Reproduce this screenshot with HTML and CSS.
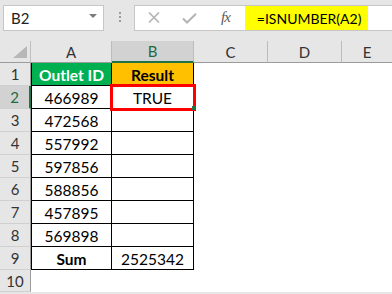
FILE: index.html
```html
<!DOCTYPE html>
<html lang="en">
<head>
    <meta charset="UTF-8">
    <meta name="viewport" content="width=device-width, initial-scale=1.0">
    <title>ISNUMBER</title>
    <link rel="stylesheet" href="styles.css">
</head>
<body>

    <div class="toolbar">
        <div class="namebox">
            <span>B2</span>
            <span class="caret"></span>
        </div>
        <div class="dots"><i></i><i></i><i></i></div>
        <div class="formula">
            <svg class="cancel" width="12" height="11" viewBox="0 0 12 11">
                <path d="M1 0.5 L11 10.5 M11 0.5 L1 10.5" stroke="#b3b3b3" stroke-width="1.6" fill="none"/>
            </svg>
            <svg class="enter" width="15" height="11" viewBox="0 0 15 11">
                <path d="M1 5.5 L5 9.5 L14 0.8" stroke="#b3b3b3" stroke-width="2" fill="none"/>
            </svg>
            <span class="fx">fx</span>
            <span class="formula-text">=ISNUMBER(A2)</span>
        </div>
    </div>

    <div class="sheet">
        <div class="corner"><span class="tri"></span></div>
        <div class="col-head">A</div>
        <div class="col-head active">B</div>
        <div class="col-head">C</div>
        <div class="col-head">D</div>
        <div class="col-head last">E</div>

        <div class="row-head">1</div>
        <div class="cell t first head-green">Outlet ID</div>
        <div class="cell t head-yellow">Result</div>
        <div class="blank"></div><div class="blank"></div><div class="blank"></div>

        <div class="row-head active">2</div>
        <div class="cell t first">466989</div>
        <div class="cell t selected">TRUE<span class="handle"></span></div>
        <div class="blank"></div><div class="blank"></div><div class="blank"></div>

        <div class="row-head">3</div>
        <div class="cell t first">472568</div>
        <div class="cell t"></div>
        <div class="blank"></div><div class="blank"></div><div class="blank"></div>

        <div class="row-head">4</div>
        <div class="cell t first">557992</div>
        <div class="cell t"></div>
        <div class="blank"></div><div class="blank"></div><div class="blank"></div>

        <div class="row-head">5</div>
        <div class="cell t first">597856</div>
        <div class="cell t"></div>
        <div class="blank"></div><div class="blank"></div><div class="blank"></div>

        <div class="row-head">6</div>
        <div class="cell t first">588856</div>
        <div class="cell t"></div>
        <div class="blank"></div><div class="blank"></div><div class="blank"></div>

        <div class="row-head">7</div>
        <div class="cell t first">457895</div>
        <div class="cell t"></div>
        <div class="blank"></div><div class="blank"></div><div class="blank"></div>

        <div class="row-head">8</div>
        <div class="cell t first">569898</div>
        <div class="cell t"></div>
        <div class="blank"></div><div class="blank"></div><div class="blank"></div>

        <div class="row-head">9</div>
        <div class="cell t first bold">Sum</div>
        <div class="cell t">2525342</div>
        <div class="blank"></div><div class="blank"></div><div class="blank"></div>

        <div class="row-head">10</div>
        <div class="blank"></div><div class="blank"></div><div class="blank"></div><div class="blank"></div><div class="blank"></div>
    </div>

</body>
</html>
```

FILE: styles.css
```css
* {
    box-sizing: border-box;
}
body {
    margin: 0;
    font-family: Lato, "Liberation Sans", sans-serif;
    background-color: #e6e6e6;
    color: #000;
    overflow: hidden;
}
.toolbar {
    height: 41px;
    display: flex;
    align-items: flex-start;
    padding-top: 5px;
    padding-left: 3px;
}
.namebox {
    width: 101px;
    height: 26px;
    background-color: #fff;
    border: 1px solid #c6c6c6;
    display: flex;
    align-items: center;
    justify-content: space-between;
    padding: 0 6px 0 7px;
    font-size: 15px;
    color: #222;
}
.caret {
    width: 0;
    height: 0;
    border-left: 4px solid transparent;
    border-right: 4px solid transparent;
    border-top: 4px solid #7a7a7a;
    margin-top: -4px;
}
.dots {
    width: 2px;
    margin: 7px 13px 0 15px;
    display: flex;
    flex-direction: column;
    gap: 2px;
}
.dots i {
    display: block;
    width: 2px;
    height: 2px;
    background-color: #9c9c9c;
}
.formula {
    flex: 1;
    height: 26px;
    margin-right: -1px;
    background-color: #fff;
    border: 1px solid #c6c6c6;
    display: flex;
    align-items: center;
    padding-left: 13px;
}
.cancel {
    margin-top: -1px;
}
.enter {
    margin-left: 22px;
    margin-top: 1px;
}
.fx {
    font-family: "Liberation Serif", serif;
    font-style: italic;
    font-size: 15px;
    color: #5a5a5a;
    margin-left: 24px;
    margin-top: -2px;
    letter-spacing: -1px;
}
.formula-text {
    align-self: stretch;
    margin-left: 15px;
    background-color: #ffff00;
    padding: 4px 7px 0 12px;
    font-size: 14px;
    color: #000;
}
.sheet {
    display: grid;
    grid-template-columns: 31px 81px 82px 74px 74px 1fr;
    grid-template-rows: 22px repeat(9, 23px) 22px;
    background-color: #fff;
}
.corner {
    background-color: #e6e6e6;
    border-right: 1px solid #c0c0c0;
    border-bottom: 1px solid #9b9b9b;
    position: relative;
}
.tri {
    position: absolute;
    right: 3px;
    bottom: 4px;
    width: 0;
    height: 0;
    border-left: 14px solid transparent;
    border-bottom: 12px solid #b7b7b7;
}
.col-head {
    background-color: #e6e6e6;
    border-right: 1px solid #bcbcbc;
    border-bottom: 1px solid #9b9b9b;
    display: flex;
    align-items: center;
    justify-content: center;
    font-size: 15px;
    color: #333;
}
.col-head.active {
    background-color: #d2d2d2;
    color: #1f6b41;
    border-bottom: 2px solid #217346;
}
.col-head.last {
    border-right: none;
}
.row-head {
    background-color: #e6e6e6;
    border-right: 1px solid #9b9b9b;
    border-bottom: 1px solid #d0d0d0;
    display: flex;
    align-items: center;
    justify-content: center;
    font-size: 15px;
    color: #333;
}
.row-head.active {
    background-color: #d2d2d2;
    color: #1f6b41;
    border-right: 2px solid #217346;
}
.cell {
    display: flex;
    align-items: center;
    justify-content: center;
    font-size: 15.5px;
    padding-top: 1px;
}
.t {
    border-right: 1px solid #000;
    border-bottom: 1px solid #000;
}
.first {
    border-left: 1px solid #000;
}
.bold {
    font-weight: bold;
}
.head-green {
    background-color: #00b050;
    color: #fff;
    font-weight: bold;
}
.head-yellow {
    background-color: #ffc000;
    font-weight: bold;
}
.selected {
    position: relative;
    outline: 3px solid #ff0000;
    outline-offset: -1px;
    z-index: 1;
}
.handle {
    position: absolute;
    right: -3px;
    bottom: -2px;
    width: 4px;
    height: 4px;
    background-color: #217346;
}
.blank {
    background-color: #fff;
}
```
